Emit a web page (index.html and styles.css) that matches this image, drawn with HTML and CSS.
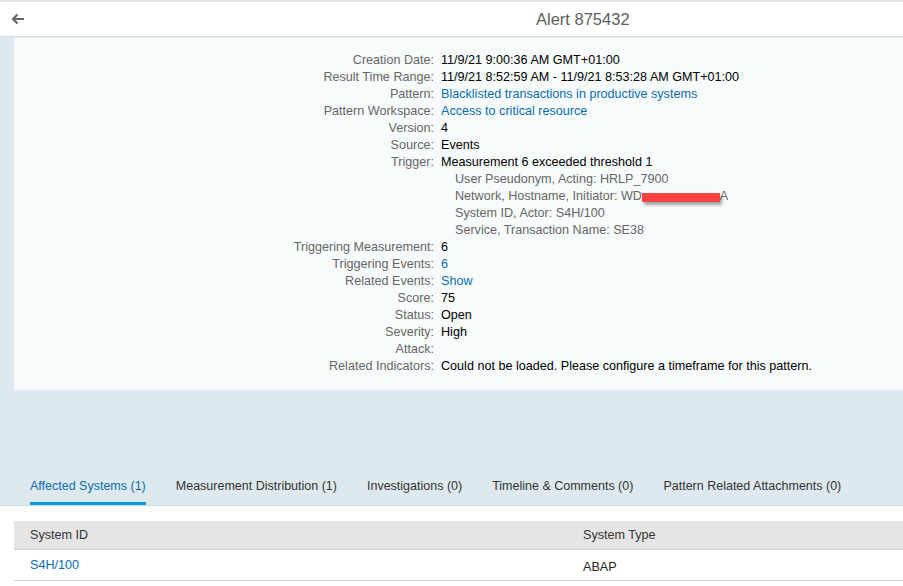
FILE: index.html
```html
<!DOCTYPE html>
<html>
<head>
<meta charset="utf-8">
<link rel="stylesheet" href="styles.css">
</head>
<body>
<div class="topband"></div>
<header class="header">
  <span class="back">
    <svg width="14" height="12" viewBox="0 0 14 12"><path d="M13 6H2M6.5 1.5L2 6l4.5 4.5" fill="none" stroke="#666" stroke-width="2.2"/></svg>
  </span>
  <span class="title">Alert 875432</span>
</header>
<main class="page">
  <section class="panel">
    <div class="form">
      <div class="lbl">Creation Date:</div><div class="val">11/9/21 9:00:36 AM GMT+01:00</div>
      <div class="lbl">Result Time Range:</div><div class="val">11/9/21 8:52:59 AM - 11/9/21 8:53:28 AM GMT+01:00</div>
      <div class="lbl">Pattern:</div><div class="val link">Blacklisted transactions in productive systems</div>
      <div class="lbl">Pattern Workspace:</div><div class="val link">Access to critical resource</div>
      <div class="lbl">Version:</div><div class="val">4</div>
      <div class="lbl">Source:</div><div class="val">Events</div>
      <div class="lbl">Trigger:</div><div class="val">Measurement 6 exceeded threshold 1</div>
      <div class="lbl"></div><div class="val sub">User Pseudonym, Acting: HRLP_7900</div>
      <div class="lbl"></div><div class="val sub">Network, Hostname, Initiator: WD<span class="redact"></span>A</div>
      <div class="lbl"></div><div class="val sub">System ID, Actor: S4H/100</div>
      <div class="lbl"></div><div class="val sub">Service, Transaction Name: SE38</div>
      <div class="lbl">Triggering Measurement:</div><div class="val">6</div>
      <div class="lbl">Triggering Events:</div><div class="val link">6</div>
      <div class="lbl">Related Events:</div><div class="val link">Show</div>
      <div class="lbl">Score:</div><div class="val">75</div>
      <div class="lbl">Status:</div><div class="val">Open</div>
      <div class="lbl">Severity:</div><div class="val">High</div>
      <div class="lbl">Attack:</div><div class="val"></div>
      <div class="lbl">Related Indicators:</div><div class="val">Could not be loaded. Please configure a timeframe for this pattern.</div>
    </div>
  </section>
  <nav class="tabs">
    <span class="tab active">Affected Systems (1)</span>
    <span class="tab">Measurement Distribution (1)</span>
    <span class="tab">Investigations (0)</span>
    <span class="tab">Timeline &amp; Comments (0)</span>
    <span class="tab">Pattern Related Attachments (0)</span>
  </nav>
</main>
<section class="content">
  <div class="table">
    <div class="row head">
      <div class="cell">System ID</div>
      <div class="cell">System Type</div>
    </div>
    <div class="row">
      <div class="cell link">S4H/100</div>
      <div class="cell low">ABAP</div>
    </div>
  </div>
</section>
</body>
</html>
```
FILE: styles.css
```css
html, body {
  margin: 0;
  padding: 0;
  background: #ffffff;
  font-family: "Liberation Sans", Arial, sans-serif;
  font-size: 12.6px;
  color: #000;
  overflow: hidden;
}
.topband {
  height: 2px;
  background: #e4e4e4;
}
.header {
  height: 34px;
  background: #fff;
  border-bottom: 1px solid #dcdcdc;
  display: flex;
  align-items: center;
  padding-left: 11px;
}
.back {
  display: flex;
  align-items: center;
  width: 14px;
}
.title {
  margin-left: 511px;
  font-size: 16.5px;
  color: #5e5e5e;
  padding-top: 1px;
}
.page {
  background: #dde9ee;
  padding-left: 14px;
  padding-top: 1px;
}
.panel {
  background: #f7fbfc;
  height: 352px;
  box-sizing: border-box;
  padding-top: 14px;
}
.form {
  display: grid;
  grid-template-columns: 420px 1fr;
  column-gap: 7px;
  line-height: 17px;
}
.lbl {
  text-align: right;
  color: #666;
}
.val {
  color: #000;
  white-space: nowrap;
}
.val.sub {
  color: #666;
  padding-left: 14px;
}
.link {
  color: #0a6db0;
}
.redact {
  display: inline-block;
  width: 78px;
  height: 9px;
  background: #fd4242;
  vertical-align: -2px;
  box-shadow: 2px 3px 3px rgba(0, 0, 0, 0.35);
}
.tabs {
  display: flex;
  gap: 30px;
  margin-left: -14px;
  padding-left: 30px;
  margin-top: 88px;
  border-bottom: 1px solid #cfd9dd;
}
.tab {
  color: #333;
  font-size: 12.5px;
  line-height: 17px;
  padding-bottom: 7px;
  border-bottom: 3px solid transparent;
}
.tab.active {
  color: #0a6db0;
  border-bottom-color: #0a9ad9;
}
.content {
  background: #fff;
  padding-top: 15px;
  padding-left: 14px;
}
.table {
  display: flex;
  flex-direction: column;
}
.row {
  display: grid;
  grid-template-columns: 553px 1fr;
  height: 30px;
  align-items: center;
  border-bottom: 1px solid #cfcfcf;
}
.row.head {
  height: 28px;
  background: #e5e5e5;
  color: #333;
}
.cell {
  padding-left: 16px;
}
.cell.low {
  padding-top: 4px;
  color: #222;
}
```
